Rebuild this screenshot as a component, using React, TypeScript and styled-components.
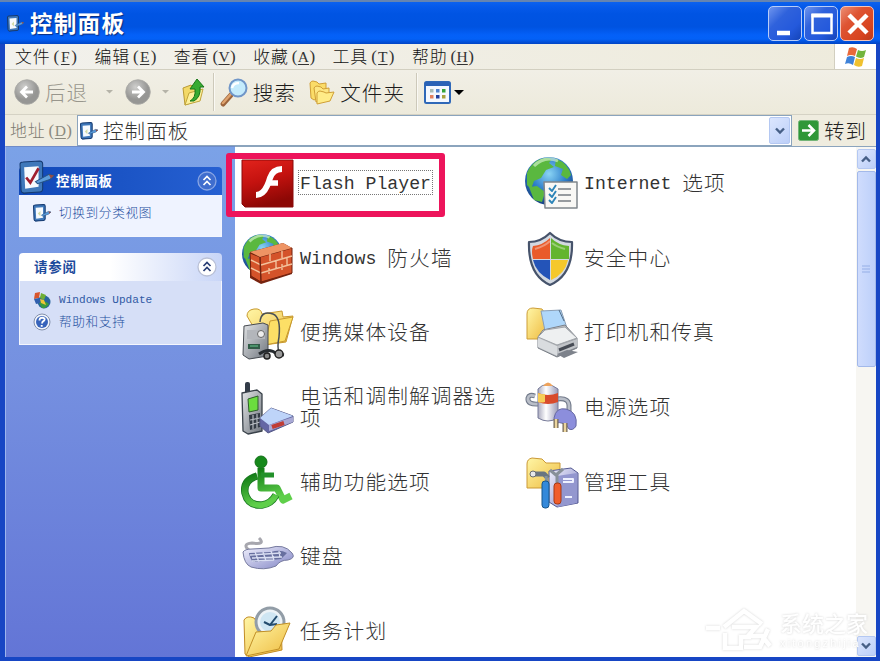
import React from 'react';
import styled, { createGlobalStyle } from 'styled-components';

const Global = createGlobalStyle`
  * { box-sizing: border-box; }
  html, body { margin: 0; padding: 0; overflow: hidden; }
  body { font-family: "Noto Sans CJK SC", "Liberation Sans", sans-serif; font-weight: 300; }
  svg { display: block; flex: none; overflow: visible; }
`;

/* ---------- text ---------- */

const TextBase = styled.span<{ $pitch: number; $color?: string; $bold?: boolean }>`
  font-size: ${p => p.$pitch * 0.95}px;
  letter-spacing: ${p => p.$pitch * 0.05}px;
  color: ${p => p.$color ?? '#333'};
  font-weight: ${p => (p.$bold ? 700 : 300)};
  line-height: 1;
  white-space: nowrap;
`;

const Latin = styled.span<{ $pitch: number }>`
  font-family: "Liberation Mono", monospace;
  font-size: ${p => p.$pitch * 0.835}px;
  line-height: 0.8;
  letter-spacing: 0;
  vertical-align: ${p => p.$pitch * 0.07}px;
  white-space: pre;
`;

const Text = ({ pitch, color, bold, children }: { pitch: number; color?: string; bold?: boolean; children: string }) => (
  <TextBase $pitch={pitch} $color={color} $bold={bold}>
    {children.split(/([\x20-\x7e]+)/).filter(Boolean).map((part, i) =>
      /^[\x20-\x7e]/.test(part) ? <Latin key={i} $pitch={pitch}>{part}</Latin> : part
    )}
  </TextBase>
);

/* ---------- window frame ---------- */

const Window = styled.div`
  width: 880px;
  height: 661px;
  display: flex;
  flex-direction: column;
  position: relative;
  overflow: hidden;
  background: #1746c4;
  border-top: 2px solid #6684b0;
`;

const TitleBar = styled.header`
  height: 42px;
  flex: none;
  display: flex;
  align-items: center;
  padding: 0 6px 0 7px;
  background: linear-gradient(180deg, #0c62ee 0, #0559ea 5px, #0054e3 12px, #0053e1 25px, #0460f8 33px, #0361f7 37px, #0144c4 42px);
`;

const TitleText = styled.div`
  flex: 1;
  padding-left: 6px;
  display: flex;
  text-shadow: 1px 1px 1px #0a2e80;
`;

const Controls = styled.div`
  display: flex;
  gap: 2px;
`;

const ControlButton = styled.button<{ $close?: boolean }>`
  width: 34px;
  height: 35px;
  padding: 0;
  display: grid;
  place-items: center;
  border: 1.5px solid ${p => (p.$close ? '#f4c4b8' : '#b8cdf8')};
  border-radius: 5px;
  background: ${p =>
    p.$close
      ? 'linear-gradient(135deg, #ec8f74 0, #de5433 35%, #d8441f 75%, #b93b1c 100%)'
      : 'linear-gradient(135deg, #6f95ee 0, #2f62dc 35%, #2459dc 70%, #1444b8 100%)'};
`;

const Client = styled.div`
  flex: 1;
  min-height: 0;
  margin: 0 4px 4px 5px;
  display: flex;
  flex-direction: column;
  background: #efecdf;
`;

/* ---------- menu ---------- */

const MenuBar = styled.nav`
  height: 26px;
  flex: none;
  display: flex;
  align-items: center;
  padding-left: 10px;
  border-bottom: 1px solid #d2cfc0;
  background: linear-gradient(90deg, #f2f1ec, #eeebdc);
`;

const MenuItem = styled.div`
  width: 79.4px;
  display: flex;
  align-items: center;
  color: #333;
`;

const Accel = styled.span`
  font-family: "Liberation Serif", serif;
  font-size: 17px;
  line-height: 1;
  font-weight: 400;
  display: inline-flex;
  padding-left: 3px;
  u { min-width: 12px; text-align: center; text-underline-offset: 2px; font-size: 15.5px; line-height: 18px; }
`;

const Flag = styled.div`
  margin-left: auto;
  width: 42px;
  height: 25px;
  display: grid;
  place-items: center;
  background: #fff;
  border-left: 1px solid #d2cfc0;
`;

/* ---------- toolbar ---------- */

const ToolBar = styled.div`
  height: 45px;
  flex: none;
  display: flex;
  align-items: center;
  padding-left: 9px;
  border-bottom: 1px solid #d5d2c4;
  background: linear-gradient(180deg, #f1efe6, #edeadb);
`;

const ToolGroup = styled.div<{ $w: number; $gap?: number }>`
  width: ${p => p.$w}px;
  flex: none;
  display: flex;
  align-items: center;
  gap: ${p => p.$gap ?? 5}px;
`;

const Divider = styled.div`
  width: 2px;
  height: 38px;
  flex: none;
  border-left: 1px solid #cdc9ba;
  border-right: 1px solid #faf9f4;
`;

/* ---------- address ---------- */

const AddressBar = styled.div`
  height: 31px;
  flex: none;
  display: flex;
  align-items: center;
  color: #8b897e;
`;

const AddressLabel = styled.div`
  width: 72px;
  padding-left: 5px;
  display: flex;
  align-items: center;
`;

const Combo = styled.div`
  width: 715px;
  height: 31px;
  display: flex;
  align-items: center;
  gap: 5px;
  padding: 0 1px 0 2px;
  border: 1px solid #8ba4bd;
  background: #fff;
`;

const ScrollBtn = styled.div<{ $w: number; $h: number }>`
  width: ${p => p.$w}px;
  height: ${p => p.$h}px;
  flex: none;
  display: grid;
  place-items: center;
  border-radius: 2px;
  border: 1px solid #b4c8f2;
  background: linear-gradient(135deg, #dce6fe, #bccff8);
`;

const Go = styled.div`
  display: flex;
  align-items: center;
  gap: 5px;
  padding-left: 6px;
`;

/* ---------- body ---------- */

const Body = styled.div`
  flex: 1;
  min-height: 0;
  display: flex;
  background: #fff;
`;

const Side = styled.aside`
  width: 230px;
  flex: none;
  display: flex;
  flex-direction: column;
  gap: 16px;
  padding: 20px 13px 0 13px;
  border-left: 1px solid #9db5ee;
  border-top: 1px solid #6f8bc8;
  background: linear-gradient(180deg, #7ba2e7 0%, #7590e0 45%, #6375d6 100%);
`;

const Head = styled.div<{ $primary?: boolean }>`
  height: 28px;
  display: flex;
  align-items: center;
  padding: 0 5px 0 ${p => (p.$primary ? 0 : 15)}px;
  border-radius: 4px 4px 0 0;
  background: ${p =>
    p.$primary ? 'linear-gradient(90deg, #1048b8, #2660d2)' : 'linear-gradient(90deg, #fff 45%, #c8d5f7)'};
`;

const HeadIcon = styled.div`
  width: 37px;
  height: 42px;
`;

const HeadText = styled.div`
  flex: 1;
  display: flex;
`;

const PanelBody = styled.div<{ $h: number; $primary?: boolean }>`
  height: ${p => p.$h}px;
  display: flex;
  flex-direction: column;
  padding: 8px 0 0 13px;
  border: 1px solid #f4f6fd;
  border-top: 0;
  background: ${p => (p.$primary ? '#eff3ff' : '#d6dff7')};
`;

const Link = styled.div<{ $h: number }>`
  height: ${p => p.$h}px;
  display: flex;
  align-items: center;
  gap: 8px;
`;

const Grid = styled.main`
  flex: 1;
  display: grid;
  grid-template-columns: 284px 284px;
  grid-auto-rows: 74.7px;
  padding-left: 6px;
  overflow: hidden;
  border-top: 1px solid #8ba4bd;
`;

const Item = styled.div`
  display: flex;
  align-items: center;
  gap: 6px;
  padding-bottom: 2px;
`;

const Label = styled.div<{ $focus?: boolean }>`
  display: flex;
  flex-direction: column;
  gap: 1px;
  margin-bottom: 2px;
  outline: ${p => (p.$focus ? '1px dotted #777' : 'none')};
  outline-offset: 1px;
`;

const Scroll = styled.div`
  width: 20px;
  flex: none;
  display: flex;
  flex-direction: column;
  align-items: center;
  gap: 2px;
  padding: 2px 0 1px;
  border-top: 1px solid #8ba4bd;
  background: #f7f6f2;
`;

const Thumb = styled.div`
  width: 19px;
  height: 196px;
  display: grid;
  place-items: center;
  border-radius: 2px;
  border: 1px solid #a3b9ea;
  background: linear-gradient(90deg, #cfdcfd, #bdd0fa);
`;

const Spacer = styled.div`
  flex: 1;
`;

const Highlight = styled.div`
  position: absolute;
  left: 226px;
  top: 151px;
  width: 219px;
  height: 64px;
  border: 6px solid #ed145b;
  border-radius: 3px;
`;

const Watermark = styled.div`
  position: absolute;
  left: 706px;
  top: 605px;
  display: flex;
  align-items: center;
  gap: 4px;
  filter: drop-shadow(0 0 1px #d4d4d4);
`;

const MarkText = styled.div`
  color: #fff;
  font-size: 22px;
  font-weight: 500;
  line-height: 27px;
  small { display: block; font: 11px/15px "Liberation Sans", sans-serif; letter-spacing: 2.2px; }
`;

/* ---------- small icons ---------- */

const PanelIcon = ({ size, check }: { size: number; check?: boolean }) => (
  <svg width={size} height={size} viewBox="0 0 34 34">
    <path d="M3 4 22 1v29L4 33z" fill="#173f7e" />
    <path d="M1 4Q1 2 4 2l16-1q3 0 3 3v24q0 3-3 3L5 32q-3 0-3-3z" fill="#3f78ba" stroke="#153a70" strokeWidth={check ? 1 : 2} />
    <path d="m5 7 14-1v20L6 28z" fill="#f6fafe" />
    {check && <path d="m7 17 4 5L19 8" fill="none" stroke="#a02030" strokeWidth="2.6" />}
    {!check && <path d="m9 18 5-5v10z" fill="#d4dca8" />}
    <path d="m16 21 13-7 5 1-4 4-12 4z" fill="#5c9cdb" stroke="#255488" />
    <path d="m29 14 5 1-3 3z" fill="#984c42" />
  </svg>
);

const NavCircle = ({ flip }: { flip?: boolean }) => (
  <svg width="26" height="26" viewBox="0 0 26 26">
    <defs>
      <radialGradient id="nav" cx=".4" cy=".3"><stop stopColor="#cfcfcd" /><stop offset="1" stopColor="#969694" /></radialGradient>
    </defs>
    <circle cx="13" cy="13" r="12.3" fill="url(#nav)" stroke="#a8a8a4" strokeWidth=".8" />
    <path d="M19 13H8M13 7.5 7.5 13l5.500 5.500" transform={flip ? 'rotate(180 13 13)' : undefined} fill="none" stroke="#fff" strokeWidth="2.800" />
  </svg>
);

const Caret = ({ color, w }: { color: string; w: number }) => (
  <svg width={w} height={w / 2} viewBox="0 0 10 5"><path d="M0 0h10L5 5z" fill={color} /></svg>
);

const UpFolder = () => (
  <svg width="24" height="28" viewBox="0 0 24 28">
    <path d="m1 10 8-3 2 2 7-1v14L3 27z" fill="#f3d967" stroke="#b99a35" />
    <path d="m3 27 4-12 14-4-3 12z" fill="#fdf09c" stroke="#c2a53d" />
    <path d="M8 23q6-3 5-12H8l7-10 7 8h-4q1 10-6 14z" fill="#38ab32" stroke="#187718" />
  </svg>
);

const Magnifier = () => (
  <svg width="27" height="28" viewBox="0 0 27 28">
    <path d="m2 26 8-9" stroke="#9c643c" strokeWidth="5" strokeLinecap="round" />
    <path d="m2 25 8-9" stroke="#dfa36e" strokeWidth="2.500" strokeLinecap="round" />
    <circle cx="17" cy="10" r="8.500" fill="#c4ebfc" stroke="#7096c8" strokeWidth="2" />
    <path d="M11 10q1-5 7-5" stroke="#fff" strokeWidth="2.500" fill="none" />
  </svg>
);

const Folders = () => (
  <svg width="26" height="24" viewBox="0 0 26 24" fill="#fbdc68" stroke="#d09f36">
    <path d="M1 3q1-2 3-2l4 1 2 2 7-1v12l-12 5-3-2z" />
    <path d="M5 8q1-2 3-2l4 1 2 2 6-1v10L7 22z" fill="#fde682" />
    <path d="M8 13q1-2 3-2l4 1 2 1 8-1-4 9-13 3z" fill="#ffec88" />
  </svg>
);

const Views = () => (
  <svg width="27" height="23" viewBox="0 0 27 23">
    <rect x="1" y="1" width="25" height="21" rx="1.500" fill="#f4f8ff" stroke="#2f68b8" strokeWidth="2" />
    <path d="M1 1h25v4H1z" fill="#2a62b6" />
    {[['#a7bbb6', 6, 8], ['#4d81ce', 12, 8], ['#33a33b', 18, 8], ['#e2805e', 6, 14], ['#203d9a', 12, 14], ['#a6a13e', 18, 14]].map(([c, x, y], i) => (
      <rect key={i} x={x} y={y} width="3.500" height="3.500" fill={c as string} />
    ))}
  </svg>
);

const WinFlag = () => (
  <svg width="22" height="20" viewBox="0 0 22 20">
    <path d="M4 1q4-2 8 1l-2 7q-4-2-8 0z" fill="#e9693a" />
    <path d="M13 3q4 2 8 0l-2 7q-4 2-8-.5z" fill="#72b53c" />
    <path d="M2 10q4-2 8 0l-2 8q-4-3-8-1z" fill="#3f82d8" />
    <path d="M11 11q4 2 8 0l-2 8q-4 2-8-1z" fill="#f0c12f" />
  </svg>
);

const ChevronV = ({ up }: { up?: boolean }) => (
  <svg width="10" height="8" viewBox="0 0 10 8">
    <path d={up ? 'M1 6.500 5 2.500l4 4' : 'M1 1.500l4 4 4-4'} fill="none" stroke="#465f86" strokeWidth="2.400" />
  </svg>
);

const Collapse = ({ dark }: { dark?: boolean }) => (
  <svg width="20" height="20" viewBox="0 0 20 20">
    <circle cx="10" cy="10" r="9" fill={dark ? '#3f6dce' : '#fff'} stroke={dark ? '#88a5e4' : '#b9c0d6'} strokeWidth="1.300" />
    <path d="m6.500 9 3.500-3.500L13.500 9m-7 5 3.500-3.500 3.500 3.500" fill="none" stroke={dark ? '#fff' : '#283d74'} strokeWidth="1.700" />
  </svg>
);

const UpdateIcon = () => (
  <svg width="18" height="18" viewBox="0 0 18 18">
    <circle cx="11" cy="11" r="6.500" fill="#28659e" />
    <path d="M6 12q5-4 10 1-3 5-7 4z" fill="#3c9b3e" />
    <path d="m2 2 5-1-1 6-5 1z" fill="#d9552b" /><path d="m8 2 5 2-2 5-4-2z" fill="#6eae34" />
    <path d="m1 8 5-1 1 5-4 1z" fill="#2f5fae" /><path d="m7 8 4 1 2 5-5-2z" fill="#efc636" />
  </svg>
);

const HelpIcon = () => (
  <svg width="18" height="18" viewBox="0 0 18 18">
    <circle cx="9" cy="9" r="8" fill="#f2f5fc" stroke="#8390ab" />
    <circle cx="9" cy="9" r="6" fill="#3763bb" />
    <path d="M6.500 7.500q0-3 3-2.800 3 .3 1.800 2.600Q9 8.500 9 10.500m-.3 1.400v1.800" fill="none" stroke="#fff" strokeWidth="1.900" />
  </svg>
);

/* ---------- control panel icons ---------- */

const Icon52 = ({ children }: { children: React.ReactNode }) => (
  <svg width="53" height="53" viewBox="0 0 53 53" strokeLinejoin="round">{children}</svg>
);

const Defs = () => (
  <svg width="0" height="0">
    <defs>
      <radialGradient id="globe" cx=".5" cy=".35" r=".65"><stop stopColor="#8ad4f4" /><stop offset=".55" stopColor="#2f7fcb" /><stop offset="1" stopColor="#164184" /></radialGradient>
      <linearGradient id="flash" x2=".3" y2="1"><stop stopColor="#e2231c" /><stop offset=".5" stopColor="#c4120f" /><stop offset="1" stopColor="#8d0805" /></linearGradient>
      <linearGradient id="green" y2="1" x2=".3"><stop stopColor="#127c16" /><stop offset="1" stopColor="#5fcf4a" /></linearGradient>
      <linearGradient id="yellow" x2="1" y2="1"><stop stopColor="#fff6a6" /><stop offset="1" stopColor="#eebb40" /></linearGradient>
      <linearGradient id="grey" x2="1" y2="1"><stop stopColor="#e4e6e8" /><stop offset="1" stopColor="#70767e" /></linearGradient>
      <linearGradient id="lilac" x2="1" y2="1"><stop stopColor="#f1f1fd" /><stop offset="1" stopColor="#7f83c4" /></linearGradient>
      <linearGradient id="cell" x2="1"><stop stopColor="#aaaabe" /><stop offset=".4" stopColor="#fff" /><stop offset="1" stopColor="#9b9bb8" /></linearGradient>
    </defs>
  </svg>
);

const Globe = ({ r, cx, cy }: { r: number; cx: number; cy: number }) => (
  <g transform={`translate(${cx} ${cy}) scale(${r / 24})`}>
    <circle r="24" fill="url(#globe)" />
    <path d="M-22-8Q-16-22-3-23q8 0 3 5l5 4-8 3-5 8-7 3-3 8-4-4zM7-22q12 4 15 16l-4 4-6-4 2-6-8-3zM-20 6l8-1 8 6-3 10-8-2zM16 4l7-3q0 9-7 15z" fill="#5ab83f" />
    <path d="M-15-15Q-4-26 9-20" fill="none" stroke="#d7f4cf" strokeWidth="3" opacity=".65" />
  </g>
);

const Flash = () => (
  <Icon52>
    <path d="M1 3h51v47H4l-3-3z" fill="url(#flash)" stroke="#8a0b0b" />
    <path d="M41 12q-9 0-12 9-1 4-3 8-4 9-11 9" fill="none" stroke="#fff" strokeWidth="6" />
    <path d="M26 26h11" stroke="#fff" strokeWidth="5.500" />
  </Icon52>
);

const Firewall = () => (
  <Icon52>
    <Globe r={20} cx={21} cy={22} />
    <path d="m9 20 33-9 9 5v26l-31 10-11-6z" fill="#78230f" />
    <path d="m9 21 10 4 32-9v25l-31 9-10-6z" fill="#d4532a" stroke="#71230f" />
    <path d="m9 20 33-9 9 5-32 9z" fill="#ee9464" />
    <path d="m10 28 10 5 31-9M10 36l10 5 31-9M29 22v7m12-10v7m-6 3v7m11-10v7m-18 3v6m13-10v6" fill="none" stroke="#f3c19b" strokeWidth="1.400" />
    <path d="m19 25 1 25" stroke="#71230f" strokeWidth="1.500" />
  </Icon52>
);

const Media = () => (
  <Icon52>
    <path d="M6 10q0-6 7-7 7-1 8 5l20-3 1 6 10-1-7 26-22 3z" fill="url(#yellow)" stroke="#c89a30" />
    <path d="m29 15 23-4-8 24-20 4z" fill="#fcdf66" stroke="#c89a30" />
    <path d="m3 20 19-3 5 2v31l-19 3-6-4z" fill="url(#grey)" stroke="#464a50" />
    <path d="M6 24h18v9H6z" fill="#b3b6bb" /><circle cx="20" cy="28" r="3.500" fill="#eee" stroke="#666" />
    <path d="M7 38h12v5H7z" fill="#315c47" /><path d="M9 40h8" stroke="#67c990" />
    <path d="M19 16Q20 4 32 8q8 3 6 23-2 10 0 15" fill="none" stroke="#4a5055" strokeWidth="1.500" />
    <path d="M18 48q10-7 18 0l7 1" fill="none" stroke="#262b2f" strokeWidth="3" />
    <circle cx="26" cy="50" r="3" fill="#888" stroke="#222" strokeWidth="1.500" /><circle cx="38" cy="48" r="4" fill="#999" stroke="#222" strokeWidth="1.500" />
  </Icon52>
);

const Phone = () => (
  <Icon52>
    <rect x="4" y="1" width="5" height="13" rx="2" fill="#333c48" />
    <path d="m1 12 15-3 5 4v37L7 53l-5-3z" fill="url(#grey)" stroke="#394149" strokeWidth="1.300" />
    <path d="m7 18 10-3v14L8 31z" fill="#6bdd3e" stroke="#2f5e2b" />
    <path d="m8 34 11-2v14L9 49z" fill="#333b44" />
    <path d="m9 39 10-2M9 44l10-3M12 34v14m4-15v14" stroke="#b3b8be" strokeWidth="1.200" />
    <path d="m19 37 11-10 22 8v6L27 52l-8-7z" fill="#6467a4" stroke="#555987" />
    <path d="m19 37 11-10 22 8-24 9z" fill="#bed4f9" />
    <path d="m28 44 24-8v5l-24 9z" fill="#a9a9d5" /><path d="m31 46 12-4" stroke="#bf3d35" strokeWidth="4" />
  </Icon52>
);

const Access = () => (
  <Icon52>
    <circle cx="20" cy="6" r="6" fill="#16891b" stroke="#127017" />
    <path d="M20 12v20h16l6 12 8-4" fill="none" stroke="url(#green)" strokeWidth="7" />
    <path d="M20 19h13" stroke="#23912a" strokeWidth="5" />
    <path d="M16 20Q2 24 4 37q3 13 17 12 9-1 14-10" fill="none" stroke="#197821" strokeWidth="7.500" />
    <path d="M16 20Q2 24 4 37q3 13 17 12 9-1 14-10" fill="none" stroke="url(#green)" strokeWidth="5.800" />
  </Icon52>
);

const Keyboard = () => (
  <Icon52>
    <g transform="translate(0 1)">
      <path d="M9 20q-9-7 2-8 14 2 7-5" fill="none" stroke="#a7a7ae" strokeWidth="3" />
      <path d="M2 21q2-3 9-3l17-1q15-5 23 5 4 5-4 7-8 0-12 6-12 5-25 1-7-3-8-15z" fill="url(#lilac)" stroke="#777b9f" />
      <path d="m8 22 22-1q9-3 16 1l-6 6-28 3q-3-3-4-9z" fill="#676f9f" />
      <path d="m9 24 31-2m-29 5 30-1M14 21l4 10m4-10 3 9m5-10 3 9m5-9 1 7M11 30l22-1" stroke="#d9def2" strokeWidth="1.300" />
    </g>
  </Icon52>
);

const Tasks = () => (
  <Icon52>
    <path d="M3 15q3-5 10-2l3 4 24-1 1 29-33 7-4-3z" fill="url(#yellow)" stroke="#c28c25" />
    <circle cx="29" cy="17" r="14" fill="#edf3f7" stroke="#929da7" strokeWidth="3" /><circle cx="29" cy="17" r="10" fill="#cfe6f3" />
    <path d="m36 11-7 9-6-3m6 3 7-1" fill="none" stroke="#244c6e" strokeWidth="2" />
    <path d="m5 51 10-24 15-1 5-6 14-2-11 26z" fill="url(#yellow)" stroke="#c18f26" />
  </Icon52>
);

const Internet = () => (
  <Icon52>
    <Globe r={24} cx={24} cy={24} />
    <path d="M19 25h33v26H20z" fill="#f9f8f5" stroke="#80868c" strokeWidth="1.500" />
    <g fill="none"><path d="M33 32h13m-13 6h13m-13 6h13" stroke="#777c83" strokeWidth="1.600" /><path d="m24 31 3 3 4-6m-7 9 3 3 4-6m-7 9 3 3 4-6" stroke="#2e85b8" strokeWidth="1.900" /></g>
  </Icon52>
);

const Shield = () => (
  <Icon52>
    <path d="M25 1q9 9 22 9 1 33-22 43Q3 43 4 10 16 10 25 1z" fill="#d3d9e1" stroke="#46536b" strokeWidth="2.200" />
    <path d="M25 6v21H8Q6 19 8 14q10-1 17-8z" fill="#e95b2a" /><path d="M26 6q7 7 18 8v13H26z" fill="#63b52f" />
    <path d="M8 28h17v20Q11 41 8 28z" fill="#2454b8" /><path d="M26 28h17Q40 42 26 48z" fill="#f5c82b" />
    <path d="M10 17q10-3 15-8M40 17q-8-2-13-6" fill="none" stroke="#fff" strokeWidth="2" opacity=".35" />
  </Icon52>
);

const Printer = () => (
  <Icon52>
    <path d="M2 8q0-6 6-6l9 1 4 6-1 24H2z" fill="url(#yellow)" stroke="#cd9d36" />
    <path d="m16 5 20-1 7 21-22 5z" fill="#afd7fa" stroke="#8b9fb5" /><path d="m34 4 5 11" stroke="#526c87" />
    <path d="m18 24 22-5 12 13v10L32 51 13 42V31z" fill="url(#grey)" stroke="#7b8088" />
    <path d="m13 31 7-7 20-3 12 11-20 7z" fill="#eef0f1" stroke="#a1a5aa" />
    <path d="m13 32 19 8v10l-19-9z" fill="#d9dcdf" />
    <path d="m32 40 20-7v8l-20 8z" fill="#c1c4c8" /><path d="m34 44 15-6" stroke="#474c55" strokeWidth="3" />
    <path d="m32 48 10-4 11 2-14 6z" fill="#7d828b" />
  </Icon52>
);

const Power = () => (
  <Icon52>
    <path d="M14 23Q2 24 3 17q1-4 7-2M32 18q13-2 12 9v6" fill="none" stroke="#737b8b" strokeWidth="5" />
    <path d="M14 23Q2 24 3 17q1-4 7-2M32 18q13-2 12 9v6" fill="none" stroke="#b9bec8" strokeWidth="2.800" />
    <path d="M13 8q8-9 20 0v29q-10 6-20 0z" fill="url(#cell)" stroke="#777b99" />
    <path d="M18 5q5-7 10 0z" fill="#eea35c" /><path d="M13 12q10 4 20 0v9q-10 4-20 0z" fill="#d84b2c" /><path d="M13 12q5 2 7 1v8q-4 1-7 0z" fill="#f7ce57" />
    <path d="M29 37q2-11 12-9 12 3 10 17-3 5-7 3-4-8-14-6z" fill="#8c8edc" stroke="#6668a1" />
    <path d="M31 38v9m9-5v9" stroke="#706454" strokeWidth="5" />
    <path d="M31 38v9m9-5v9" stroke="#ecd59e" strokeWidth="2.500" />
  </Icon52>
);

const Tools = () => (
  <Icon52>
    <path d="M2 8q0-5 5-6l10 1 4 4h14v25H2z" fill="url(#yellow)" stroke="#cb9936" />
    <path d="m24 15 22-3 7 5v30l-21 4-8-5z" fill="url(#lilac)" stroke="#555a93" /><path d="m32 20 20-3v30l-19 4z" fill="#9397cf" /><path d="M38 23h10v3H38m2 15h7" stroke="#eef1ff" strokeWidth="2" fill="none" />
    <path d="M8 18h11l4 4" stroke="#6a7580" strokeWidth="5" fill="none" /><path d="m21 20 1 8" stroke="#87949f" strokeWidth="3" />
    <rect x="17" y="25" width="7" height="27" rx="3" fill="#3489da" stroke="#17568c" /><path d="m25 14 6 5 7-6m-6 6v9" stroke="#879099" strokeWidth="3" fill="none" /><rect x="29" y="27" width="7" height="21" rx="3" fill="#f05e2c" stroke="#a83915" />
    <circle cx="8" cy="18" r="3" fill="#e6e8ea" stroke="#676d73" />
  </Icon52>
);

/* ---------- data ---------- */

const menus = [['文件', 'F'], ['编辑', 'E'], ['查看', 'V'], ['收藏', 'A'], ['工具', 'T'], ['帮助', 'H']];

const items: { icon: React.ReactNode; lines: string[]; focus?: boolean; empty?: boolean }[] = [
  { icon: <Flash />, lines: ['Flash Player'], focus: true },
  { icon: <Internet />, lines: ['Internet 选项'] },
  { icon: <Firewall />, lines: ['Windows 防火墙'] },
  { icon: <Shield />, lines: ['安全中心'] },
  { icon: <Media />, lines: ['便携媒体设备'] },
  { icon: <Printer />, lines: ['打印机和传真'] },
  { icon: <Phone />, lines: ['电话和调制解调器选', '项'] },
  { icon: <Power />, lines: ['电源选项'] },
  { icon: <Access />, lines: ['辅助功能选项'] },
  { icon: <Tools />, lines: ['管理工具'] },
  { icon: <Keyboard />, lines: ['键盘'] },
  { icon: null, lines: [], empty: true },
  { icon: <Tasks />, lines: ['任务计划'] },
];

export default function App() {
  return (
    <Window>
      <Global />
      <TitleBar>
        <PanelIcon size={17} />
        <TitleText><Text pitch={23.8} color="#fff" bold>控制面板</Text></TitleText>
        <Controls>
          <ControlButton aria-label="最小化"><svg width="34" height="34"><path d="M8 26h13" stroke="#fff" strokeWidth="4.500" /></svg></ControlButton>
          <ControlButton aria-label="最大化"><svg width="34" height="34"><path d="M7.500 8h19v18h-19z" fill="none" stroke="#fff" strokeWidth="2.500" /><path d="M6.500 8.500h21" stroke="#fff" strokeWidth="4" /></svg></ControlButton>
          <ControlButton $close aria-label="关闭"><svg width="34" height="34"><path d="m8 8 18 18M26 8 8 26" stroke="#fff" strokeWidth="4.500" /></svg></ControlButton>
        </Controls>
      </TitleBar>
      <Client>
        <MenuBar>
          {menus.map(([name, key]) => (
            <MenuItem key={key}>
              <Text pitch={17.8} color="#111">{name}</Text>
              <Accel>(<u>{key}</u>)</Accel>
            </MenuItem>
          ))}
          <Flag><WinFlag /></Flag>
        </MenuBar>
        <ToolBar>
          <ToolGroup $w={92}><NavCircle /><Text pitch={21.6} color="#98968c">后退</Text></ToolGroup>
          <ToolGroup $w={19}><Caret color="#b5b3a8" w={7} /></ToolGroup>
          <ToolGroup $w={37}><NavCircle flip /></ToolGroup>
          <ToolGroup $w={20}><Caret color="#b5b3a8" w={7} /></ToolGroup>
          <ToolGroup $w={31}><UpFolder /></ToolGroup>
          <Divider />
          <ToolGroup $w={81} $gap={5}>
            <Spacer /><Magnifier /><Text pitch={21.6} color="#1c1c1c">搜索</Text>
          </ToolGroup>
          <ToolGroup $w={109} $gap={5}>
            <Spacer /><Folders /><Text pitch={21.6} color="#1c1c1c">文件夹</Text>
          </ToolGroup>
          <ToolGroup $w={11} />
          <Divider />
          <ToolGroup $w={50} $gap={3}><ToolGroup $w={3} /><Views /><Caret color="#000" w={10} /></ToolGroup>
        </ToolBar>
        <AddressBar>
          <AddressLabel><Text pitch={17.8} color="#7d7b71">地址</Text><Accel>(<u>D</u>)</Accel></AddressLabel>
          <Combo>
            <PanelIcon size={18} />
            <Text pitch={21.6}>控制面板</Text>
            <Spacer />
            <ScrollBtn $w={21} $h={27}><ChevronV /></ScrollBtn>
          </Combo>
          <Go>
            <svg width="21" height="21"><rect x=".5" y=".5" width="20" height="20" rx="2" fill="#2f9738" stroke="#73b577" /><path d="M4 10.500h11M10.500 5l5.500 5.500-5.500 5.500" fill="none" stroke="#fff" strokeWidth="2.500" /></svg>
            <Text pitch={21.6} color="#222">转到</Text>
          </Go>
        </AddressBar>
        <Body>
          <Side>
            <section>
              <Head $primary>
                <HeadIcon><PanelIcon size={35} check /></HeadIcon>
                <HeadText><Text pitch={14.2} color="#fff" bold>控制面板</Text></HeadText>
                <Collapse dark />
              </Head>
              <PanelBody $h={42} $primary>
                <Link $h={19}><PanelIcon size={18} /><Text pitch={13.3} color="#244f9e">切换到分类视图</Text></Link>
              </PanelBody>
            </section>
            <section>
              <Head>
                <HeadText><Text pitch={14.2} color="#1e4b9c" bold>请参阅</Text></HeadText>
                <Collapse />
              </Head>
              <PanelBody $h={64}>
                <Link $h={21}><UpdateIcon /><Text pitch={13.3} color="#315aa5">Windows Update</Text></Link>
                <Link $h={23}><HelpIcon /><Text pitch={13.3} color="#244f9e">帮助和支持</Text></Link>
              </PanelBody>
            </section>
          </Side>
          <Grid>
            {items.map((item, i) => (
              <Item key={i}>
                {!item.empty && item.icon}
                <Label $focus={item.focus}>
                  {item.lines.map(l => <Text key={l} pitch={21.8}>{l}</Text>)}
                </Label>
              </Item>
            ))}
          </Grid>
          <Scroll>
            <ScrollBtn $w={19} $h={20}><ChevronV up /></ScrollBtn>
            <Thumb><svg width="8" height="9"><path d="M0 1h8M0 4h8M0 7h8" stroke="#95aee6" /></svg></Thumb>
            <Spacer />
            <ScrollBtn $w={19} $h={20}><ChevronV /></ScrollBtn>
          </Scroll>
        </Body>
      </Client>
      <Defs />
      <Highlight />
      <Watermark>
        <svg width="70" height="46" viewBox="0 0 70 46" fill="none" stroke="#fff" strokeWidth="4.500">
          <path d="M0 21h14m4-1L38 4l18 13M26 20h24l-8 9h14l8 10M19 26v15h16V30h10M38 40h16l8-18" />
        </svg>
        <MarkText>系统之家<small>xitongzhijia</small></MarkText>
      </Watermark>
    </Window>
  );
}
